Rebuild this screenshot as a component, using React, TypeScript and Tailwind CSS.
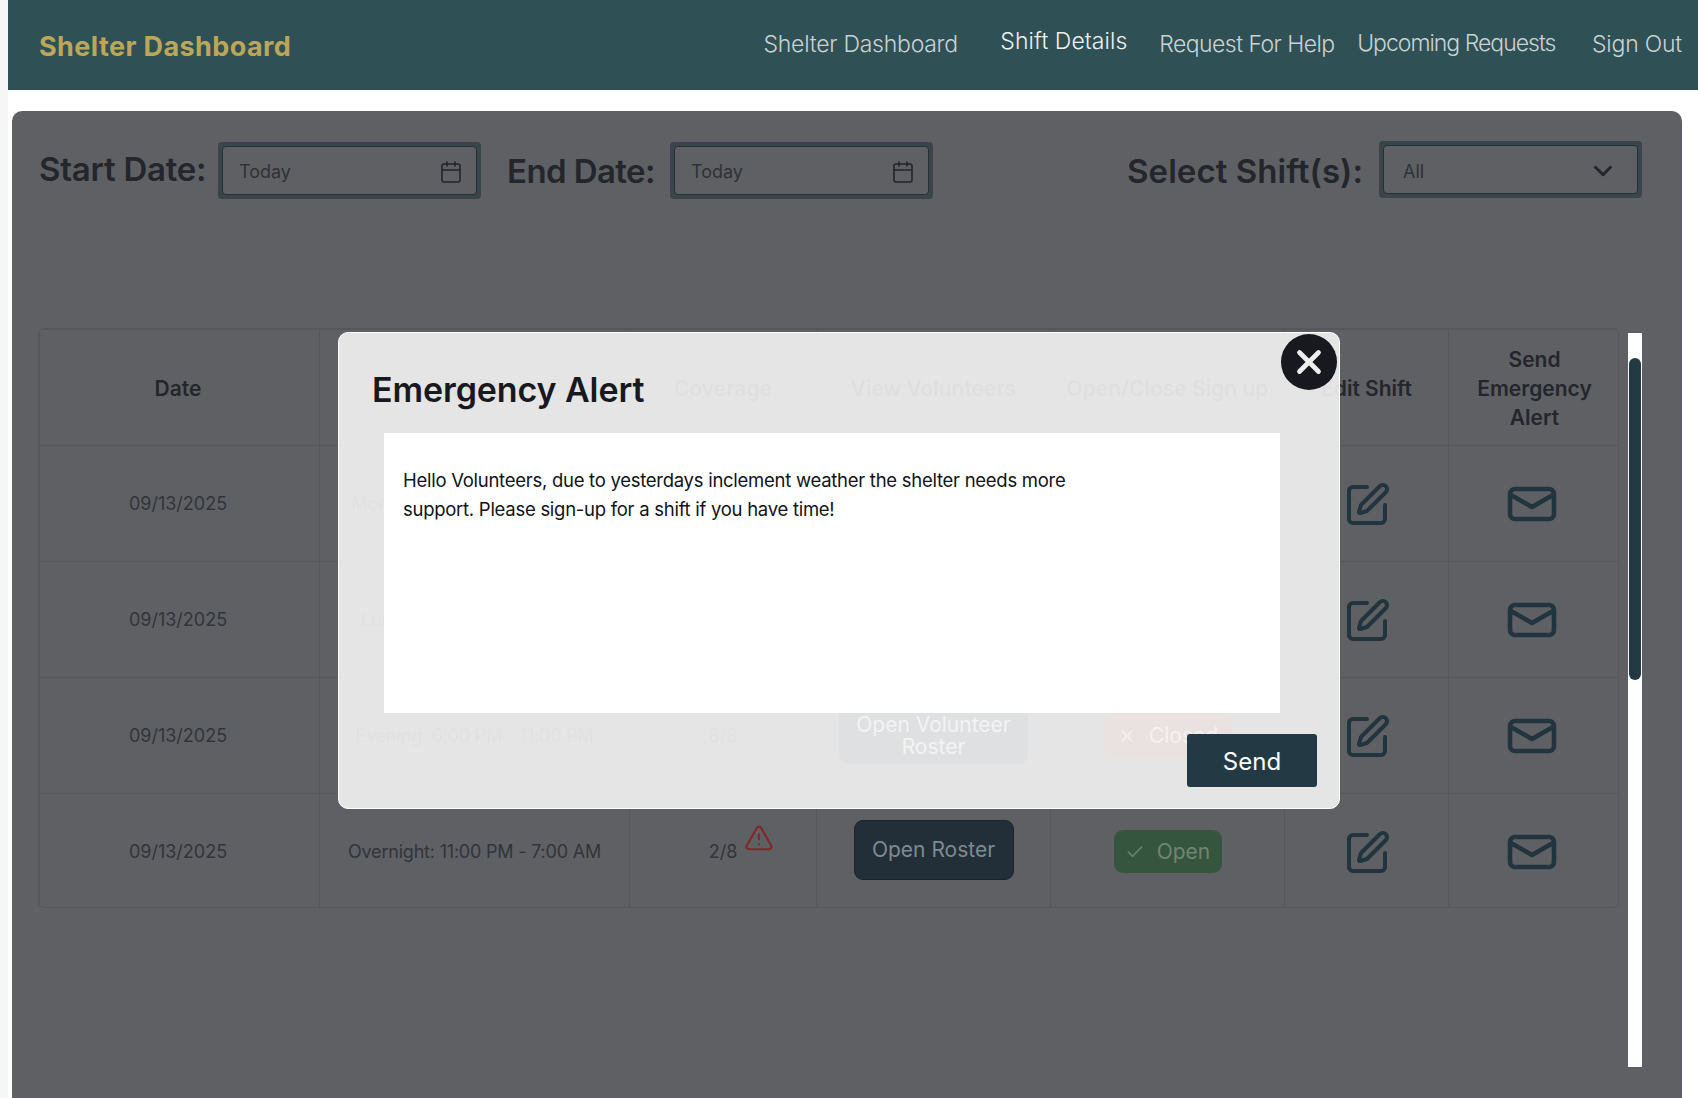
import { Calendar, Check, ChevronDown, SquarePen, TriangleAlert, X } from "lucide-react";

const font = "font-['Inter','Noto_Sans',sans-serif]";

function MailIcon() {
  return (
    <svg width="50" height="36" viewBox="0 0 50 36" fill="none" stroke="#22343e" strokeWidth="4.6" strokeLinejoin="round" strokeLinecap="round">
      <rect x="3" y="3" width="44" height="30" rx="5" />
      <polyline points="4,9 25,21 46,9" />
    </svg>
  );
}

function DateField({ label }: { label: string }) {
  return (
    <div className="w-[263px] h-[57px] rounded-[4px] bg-[#3a4549] p-[4px]">
      <div className="h-full rounded-[4px] border border-[#22303a] bg-[#5f6064] pl-[16px] pr-[13px] pt-[3px] flex items-center justify-between text-[18px] font-normal tracking-normal text-[#2f3236]">
        <span>{label}</span>
        <Calendar size={24} strokeWidth={1.6} color="#22262c" />
      </div>
    </div>
  );
}

type Row = {
  shift: string;
  coverage: string;
  roster: string;
  open: boolean;
  low?: boolean;
};

const rows: Row[] = [
  { shift: "Morning: 6:00 AM - 12:00 PM", coverage: "8/8", roster: "Open Volunteer Roster", open: false },
  { shift: "Lunch: 12:00 PM - 6:00 PM", coverage: "8/8", roster: "Open Volunteer Roster", open: false },
  { shift: "Evening: 6:00 PM - 11:00 PM", coverage: "8/8", roster: "Open Volunteer Roster", open: false },
  { shift: "Overnight: 11:00 PM - 7:00 AM", coverage: "2/8", roster: "Open Roster", open: true, low: true },
];

const th = "border border-[#55575c] text-[21px] leading-[29px] font-semibold text-[#24262c] text-center align-middle pt-[2px]";
const td = "border border-[#55575c] text-center align-middle text-[18px] text-[#32343a]";

export default function App() {
  return (
    <div className={`${font} w-[1698px] h-[1098px] overflow-hidden bg-white flex`}>
      <div className="w-[8px] shrink-0 bg-[#f6f6f6]" />
      <div className="w-[1690px] flex flex-col">
        <nav className="h-[90px] shrink-0 bg-[#2f5055] flex items-center pl-[31px] pr-[16px] text-[23px] font-light text-[#c9d2d4] tracking-[-0.2px]">
          <div className="w-[725px] text-[27px] font-bold tracking-[0.4px] text-[#bba65a] mt-[4px] whitespace-nowrap">Shelter Dashboard</div>
          <a className="whitespace-nowrap w-[237px] mt-[-2px] tracking-[-0.25px]">Shelter Dashboard</a>
          <a className="whitespace-nowrap w-[159px] mt-[-7px] tracking-[0.05px] text-[#eef2f2]">Shift Details</a>
          <a className="whitespace-nowrap w-[198px] mt-[-1px] tracking-[-0.55px]">Request For Help</a>
          <a className="whitespace-nowrap w-[235px] mt-[-3px] tracking-[-1px]">Upcoming Requests</a>
          <a className="whitespace-nowrap mt-[-1px]">Sign Out</a>
        </nav>

        <div className="ml-[4px] mr-[16px] mt-[21px] flex-1 min-h-0 relative rounded-t-[10px] rounded-b-none bg-[#5f6064] pl-[27px] pr-[40px]">
          <div className="flex items-center pt-[30px] h-[88px] text-[#24262c] text-[33px] font-semibold whitespace-nowrap tracking-[-0.25px]">
            <span className="w-[179px] mt-[-1px]">Start Date:</span>
            <DateField label="Today" />
            <span className="ml-[26px] w-[163px] mt-[3px] tracking-[-0.6px]">End Date:</span>
            <DateField label="Today" />
            <span className="ml-auto mr-[16px] mt-[3px] tracking-[0.05px]">Select Shift(s):</span>
            <div className="w-[263px] h-[57px] mt-[-1px] rounded-[4px] bg-[#3a4549] p-[4px]">
              <div className="h-full rounded-[4px] border border-[#22303a] bg-[#5f6064] pl-[19px] pr-[19px] pt-[3px] flex items-center justify-between text-[18px] text-[#2f3236] font-normal tracking-normal">
                <span>All</span>
                <ChevronDown size={30} strokeWidth={2.4} color="#22262c" />
              </div>
            </div>
          </div>

          <div className="flex items-start mt-[129px]">
            <div className="ml-[-1px] w-[1581px] h-[580px] rounded-[6px] overflow-hidden border border-[#55575c]">
              <table className="w-full h-full table-fixed border-collapse">
                <colgroup>
                  <col className="w-[280px]" />
                  <col className="w-[310px]" />
                  <col className="w-[187px]" />
                  <col className="w-[234px]" />
                  <col className="w-[234px]" />
                  <col className="w-[164px]" />
                  <col className="w-[172px]" />
                </colgroup>
                <thead>
                  <tr className="h-[116px]">
                    <th className={`${th} pr-[3px]`}>Date</th>
                    <th className={th}>Shift</th>
                    <th className={th}>Coverage</th>
                    <th className={th}>View Volunteers</th>
                    <th className={th}>Open/Close Sign up</th>
                    <th className={th}>Edit Shift</th>
                    <th className={th}>
                      Send
                      <br />
                      Emergency
                      <br />
                      Alert
                    </th>
                  </tr>
                </thead>
                <tbody>
                  {rows.map((r, i) => (
                    <tr key={i} className="h-[116px]">
                      <td className={`${td} pr-[3px]`}>09/13/2025</td>
                      <td className={`${td} tracking-[-0.2px]`}>{r.shift}</td>
                      <td className={td}>
                        <span className="relative inline-block">
                          {r.coverage}
                          {r.low && (
                            <TriangleAlert size={30} strokeWidth={1.8} color="#7f2a2a" className="absolute left-[35px] top-[-15px]" />
                          )}
                        </span>
                      </td>
                      <td className={td}>
                        {r.open ? (
                          <button className="w-[160px] h-[60px] mx-auto mb-[3px] block rounded-[9px] bg-[#222f38] border border-[#1f2329] text-[21px] text-[#7f8a90]">{r.roster}</button>
                        ) : (
                          <button className="w-[189px] h-[56px] mx-auto block rounded-[9px] bg-[#222f38] text-[21px] leading-[22px] text-[#e6e9ea]">{r.roster}</button>
                        )}
                      </td>
                      <td className={td}>
                        {r.open ? (
                          <span className="inline-flex items-center justify-center gap-[12px] w-[108px] h-[43px] rounded-[9px] bg-[#35553e] text-[21px] text-[#6f8575]">
                            <Check size={20} strokeWidth={1.8} />
                            Open
                          </span>
                        ) : (
                          <span className="inline-flex items-center justify-center gap-[12px] w-[128px] h-[43px] rounded-[9px] bg-[#8a3a3a] text-[21px] text-[#e8e0e0]">
                            <X size={20} strokeWidth={1.8} />
                            Closed
                          </span>
                        )}
                      </td>
                      <td className={td}>
                        <SquarePen size={48} strokeWidth={2} color="#22343e" className="mx-auto mt-[2px]" />
                      </td>
                      <td className={td}>
                        <span className="flex justify-center ml-[-5px] mt-[1px]">
                          <MailIcon />
                        </span>
                      </td>
                    </tr>
                  ))}
                </tbody>
              </table>
            </div>
            <div className="ml-[9px] mt-[5px] w-[14px] h-[734px] bg-white pt-[25px] px-[1px]">
              <div className="h-[322px] rounded-full bg-[#233a44]" />
            </div>
          </div>

          <div className="absolute left-[326px] top-[221px] w-[1002px] h-[477px] rounded-[10px] border border-white bg-[#f4f4f4]/90">
            <h2 className="pl-[33px] pt-[35px] text-[34px] leading-[44px] font-semibold text-[#18191e] tracking-[-0.1px]">Emergency Alert</h2>
            <div className="ml-[45px] mt-[21px] w-[896px] h-[280px] bg-white pl-[19px] pt-[33px] text-[18.5px] leading-[29px] text-[#111318]">
              <p className="w-[720px] tracking-[-0.27px]">Hello Volunteers, due to yesterdays inclement weather the shelter needs more support. Please sign-up for a shift if you have time!</p>
            </div>
            <div className="flex justify-end pr-[22px] mt-[21px]">
              <button className="w-[130px] h-[53px] rounded-[3px] bg-[#233a44] text-white text-[24px] pt-[2px]">Send</button>
            </div>
            <button className="absolute right-[2px] top-[1px] w-[56px] h-[56px] rounded-full bg-[#18191e] flex items-center justify-center">
              <X size={38} strokeWidth={3} color="#eeeeee" />
            </button>
          </div>
        </div>
      </div>
    </div>
  );
}
